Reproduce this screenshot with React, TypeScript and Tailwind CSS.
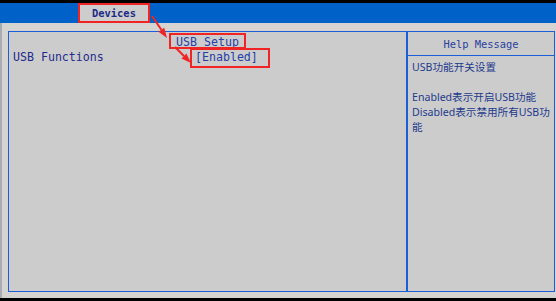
import React from 'react';

const mono = { fontFamily: '"DejaVu Sans Mono", "Liberation Mono", monospace' };

function Arrow({ x1, y1, x2, y2 }: { x1: number; y1: number; x2: number; y2: number }) {
  // line with a filled head at (x2, y2)
  const dx = x2 - x1;
  const dy = y2 - y1;
  const len = Math.hypot(dx, dy);
  const ux = dx / len;
  const uy = dy / len;
  const hl = 10;
  const hw = 3.5;
  const bx = x2 - ux * hl;
  const by = y2 - uy * hl;
  const pts = `${x2},${y2} ${bx - uy * hw},${by + ux * hw} ${bx + uy * hw},${by - ux * hw}`;
  return (
    <g>
      <line x1={x1} y1={y1} x2={bx} y2={by} stroke="#f02424" strokeWidth={2} />
      <polygon points={pts} fill="#f02424" />
    </g>
  );
}

export default function App() {
  return (
    <div className="relative w-[556px] h-[301px] overflow-hidden bg-[#d6d4d0] flex flex-col">
      <div className="h-[3px] bg-black" />
      <div className="h-[20px] bg-[#0062c8] flex">
        <div className="ml-[78px] w-[72px] bg-[#cdcdcd] flex items-center justify-center pt-[2px]">
          <span style={mono} className="text-[10.4px] font-bold text-[#1c2a86]">Devices</span>
        </div>
      </div>
      <div className="flex-1 min-h-0 flex pt-[8px] pb-[6px] pl-[6px] pr-[1px] border-l-2 border-[#a9acb2]">
        <div className="flex-1 min-w-0 flex border border-[#1a5fd8] bg-[#cccccc]">
          <div className="w-[397px] shrink-0 pt-[3px] text-[#1f2c8c]" style={mono}>
            <div className="text-center text-[11.6px] leading-[14px] text-[#2640a8]">USB Setup</div>
            <div className="flex mt-[1px] text-[11.6px] leading-[14px]">
              <span className="pl-[4px] w-[186px]">USB Functions</span>
              <span className="text-[#2640a8]">[Enabled]</span>
            </div>
          </div>
          <div className="w-[2px] shrink-0 bg-[#1a5fd8]" />
          <div className="flex-1 min-w-0 overflow-hidden flex flex-col">
            <div className="h-[24px] shrink-0 border-b border-[#1a5fd8] flex items-center justify-center">
              <span style={mono} className="text-[10.4px] text-[#2a3f9f] pt-[3px]">Help Message</span>
            </div>
            <div
              className="pl-[4px] pt-[4px] text-[10.6px] leading-[15px] text-[#1f3a8c]"
              style={{ fontFamily: '"Noto Sans", "Noto Sans CJK SC", sans-serif' }}
            >
              <div>USB功能开关设置</div>
              <div className="h-[15px]" />
              <div>Enabled表示开启USB功能</div>
              <div className="whitespace-nowrap">Disabled表示禁用所有USB功</div>
              <div>能</div>
            </div>
          </div>
        </div>
      </div>
      <div className="h-[3px] bg-black" />

      {/* annotation boxes */}
      <div className="absolute left-[78px] top-[3px] w-[72px] h-[20px] border-2 border-[#f02424]" />
      <div className="absolute left-[169px] top-[33px] w-[77px] h-[16px] border-2 border-[#f02424]" />
      <div className="absolute left-[190px] top-[48px] w-[80px] h-[20px] border-2 border-[#f02424]" />
      <svg className="absolute left-0 top-0" width={556} height={301}>
        <Arrow x1={152} y1={16} x2={167} y2={38} />
        <Arrow x1={175} y1={47} x2={191} y2={63} />
      </svg>
    </div>
  );
}
